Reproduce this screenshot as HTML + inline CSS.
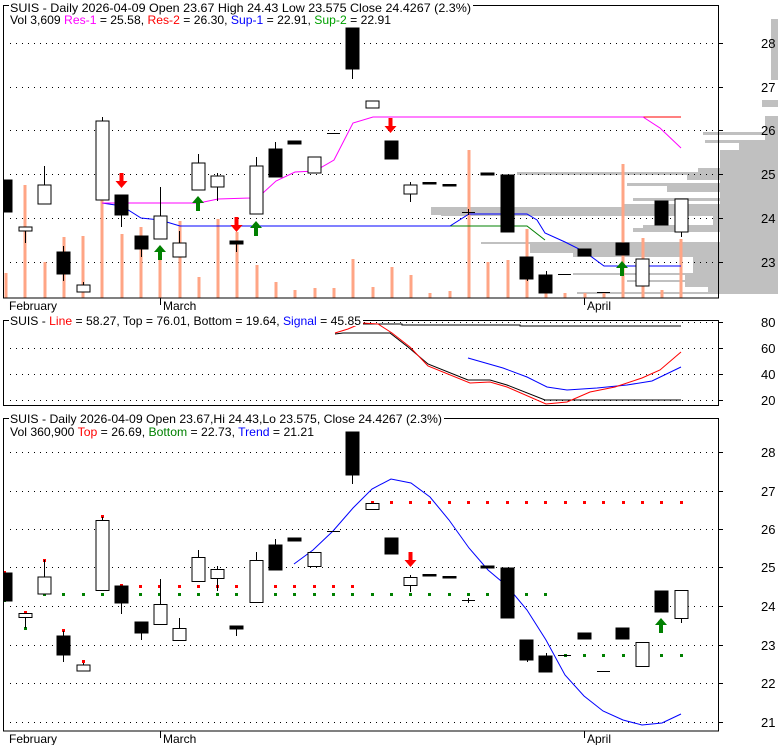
<!DOCTYPE html>
<html><head><meta charset="utf-8"><style>
html,body{margin:0;padding:0;background:#fff;}
svg{display:block;font-family:"Liberation Sans",Arial,sans-serif;font-size:12px;}
</style></head><body>
<svg width="780" height="745" viewBox="0 0 780 745" xmlns="http://www.w3.org/2000/svg">
<defs>
<clipPath id="c1"><rect x="3" y="5" width="775" height="293"/></clipPath>
<clipPath id="c1b"><rect x="3" y="5" width="716" height="293"/></clipPath>
<clipPath id="c3"><rect x="3" y="418" width="716" height="313"/></clipPath>
</defs>
<rect width="780" height="745" fill="#fff"/>

<!-- ===== TOP PANEL ===== -->
<g clip-path="url(#c1)" fill="#c0c0c0">
<rect x="771" y="19" width="8" height="61"/>
<rect x="762" y="100" width="17" height="7"/>
<rect x="765" y="116" width="14" height="178"/>
<rect x="703" y="132" width="76" height="3"/>
<rect x="705" y="140" width="74" height="3"/>
<rect x="739" y="143" width="40" height="8"/>
<rect x="720" y="150" width="59" height="144"/>
<rect x="698" y="168" width="81" height="4"/>
<rect x="517" y="172" width="262" height="3"/>
<rect x="687" y="175" width="92" height="5"/>
<rect x="627" y="183" width="152" height="3"/>
<rect x="667" y="186" width="112" height="6"/>
<rect x="633" y="198" width="146" height="3"/>
<rect x="623" y="204" width="156" height="3"/>
<rect x="431" y="207" width="348" height="8"/>
<rect x="441" y="211" width="338" height="5"/>
<rect x="713" y="216" width="66" height="10"/>
<rect x="643" y="225" width="136" height="3"/>
<rect x="633" y="228" width="146" height="4"/>
<rect x="481" y="242" width="298" height="2"/>
<rect x="530" y="244" width="249" height="9"/>
<rect x="573" y="253" width="206" height="4"/>
<rect x="693" y="257" width="86" height="16"/>
<rect x="573" y="273" width="206" height="2"/>
<rect x="685" y="275" width="94" height="12"/>
<rect x="627" y="280" width="152" height="2"/>
<rect x="708" y="287" width="71" height="6"/>
<rect x="577" y="292" width="202" height="2"/>
</g>

<!-- grid -->
<g stroke="#000" stroke-width="1" stroke-dasharray="1,5">
<line x1="10" y1="43.5" x2="719" y2="43.5"/>
<line x1="10" y1="87.5" x2="719" y2="87.5"/>
<line x1="10" y1="130.5" x2="719" y2="130.5"/>
<line x1="10" y1="174.5" x2="719" y2="174.5"/>
<line x1="10" y1="218.5" x2="719" y2="218.5"/>
<line x1="10" y1="262.5" x2="719" y2="262.5"/>
</g>

<!-- volume bars -->
<g clip-path="url(#c1b)" fill="#ffa585">
<rect x="4.5" y="273" width="3" height="25"/>
<rect x="23.5" y="185" width="3" height="113"/>
<rect x="43.5" y="262" width="3" height="36"/>
<rect x="62.5" y="237" width="3" height="61"/>
<rect x="81.5" y="236" width="3" height="62"/>
<rect x="100.5" y="200" width="3" height="98"/>
<rect x="120.5" y="234" width="3" height="64"/>
<rect x="139.5" y="227" width="3" height="71"/>
<rect x="158.5" y="257" width="3" height="41"/>
<rect x="178.5" y="221" width="3" height="77"/>
<rect x="197.5" y="277" width="3" height="21"/>
<rect x="216.5" y="219" width="3" height="79"/>
<rect x="235.5" y="232" width="3" height="66"/>
<rect x="255.5" y="265" width="3" height="33"/>
<rect x="274.5" y="282" width="3" height="16"/>
<rect x="293.5" y="290" width="3" height="8"/>
<rect x="313.5" y="288" width="3" height="10"/>
<rect x="332.5" y="288" width="3" height="10"/>
<rect x="351.5" y="259" width="3" height="39"/>
<rect x="371.5" y="287" width="3" height="11"/>
<rect x="390.5" y="267" width="3" height="31"/>
<rect x="409.5" y="275" width="3" height="23"/>
<rect x="428.5" y="293" width="3" height="5"/>
<rect x="448.5" y="291" width="3" height="7"/>
<rect x="467.5" y="150" width="3" height="148"/>
<rect x="486.5" y="262" width="3" height="36"/>
<rect x="506.5" y="260" width="3" height="38"/>
<rect x="525.5" y="229" width="3" height="69"/>
<rect x="544.5" y="292" width="3" height="6"/>
<rect x="563.5" y="293" width="3" height="5"/>
<rect x="583.5" y="293" width="3" height="5"/>
<rect x="602.5" y="293" width="3" height="5"/>
<rect x="621.5" y="164" width="3" height="134"/>
<rect x="641.5" y="238" width="3" height="60"/>
<rect x="660.5" y="290" width="3" height="8"/>
<rect x="679.5" y="239" width="3" height="59"/>
</g>

<!-- support / resistance -->
<g fill="none" stroke-width="1">
<polyline stroke="#008000" points="450,226 527,226 545,240"/>
<polyline stroke="#0000ff" points="102,203 122,206 141,218 160,220 180,226 450,226 469,214 527,214 537,220 545,233 565,242 585,252 604,266 681,266"/>
<polyline stroke="#ff0000" points="643,117 681,117"/>
<polyline stroke="#ff00ff" points="102,203 199,203 218,199 250,198 263,193 276,181 295,172 315,171 334,160 353,123 373,117 643,117 660,128 681,148"/>
</g>

<!-- candles top -->
<g stroke="#000" stroke-width="1" clip-path="url(#c1b)">
<line x1="25.5" y1="227" x2="25.5" y2="243"/><rect x="19" y="227" width="13" height="4" fill="#fff"/>
<line x1="44.5" y1="166" x2="44.5" y2="185"/><rect x="38" y="185" width="13" height="19" fill="#fff"/>
<line x1="63.5" y1="246" x2="63.5" y2="281"/><rect x="57" y="252" width="13" height="22" fill="#000"/>
<line x1="83.5" y1="282" x2="83.5" y2="285"/><rect x="77" y="285" width="13" height="7" fill="#fff"/>
<line x1="102.5" y1="117" x2="102.5" y2="121"/><rect x="96" y="121" width="13" height="79" fill="#fff"/>
<line x1="121.5" y1="195" x2="121.5" y2="227"/><rect x="115" y="195" width="13" height="20" fill="#000"/>
<line x1="141.5" y1="236" x2="141.5" y2="257"/><rect x="135" y="236" width="13" height="13" fill="#000"/>
<line x1="160.5" y1="187" x2="160.5" y2="216"/><rect x="154" y="216" width="13" height="23" fill="#fff"/>
<line x1="179.5" y1="231" x2="179.5" y2="243"/><rect x="173" y="243" width="13" height="14" fill="#fff"/>
<line x1="198.5" y1="154" x2="198.5" y2="163"/><rect x="192" y="163" width="13" height="27" fill="#fff"/>
<line x1="217.5" y1="173" x2="217.5" y2="201"/><rect x="211" y="176" width="13" height="11" fill="#fff"/>
<line x1="236.5" y1="241" x2="236.5" y2="252"/><rect x="230" y="241" width="13" height="3" fill="#000"/>
<line x1="256.5" y1="157" x2="256.5" y2="166"/><rect x="250" y="166" width="13" height="48" fill="#fff"/>
<line x1="275.5" y1="142" x2="275.5" y2="149"/><rect x="269" y="149" width="13" height="28" fill="#000"/>
<rect x="288" y="141" width="13" height="3" fill="#000"/>
<rect x="308" y="157" width="13" height="16" fill="#fff"/>
<line x1="327" y1="133.5" x2="340" y2="133.5"/>
<line x1="352.5" y1="28" x2="352.5" y2="79"/><rect x="346" y="28" width="13" height="41" fill="#000"/>
<rect x="366" y="101" width="13" height="7" fill="#fff"/>
<rect x="385" y="141" width="13" height="18" fill="#000"/>
<line x1="410.5" y1="182" x2="410.5" y2="202"/><rect x="404" y="185" width="13" height="9" fill="#fff"/>
<rect x="423" y="182.5" width="13" height="1.5" fill="#000"/>
<rect x="443" y="184.5" width="13" height="1.5" fill="#000"/>
<line x1="462" y1="212.5" x2="475" y2="212.5"/><line x1="468.5" y1="209" x2="468.5" y2="215"/>
<rect x="481" y="173" width="13" height="2" fill="#000"/>
<rect x="501" y="175" width="13" height="57" fill="#000"/>
<line x1="527.5" y1="257" x2="527.5" y2="281"/><rect x="520" y="257" width="13" height="22" fill="#000"/>
<line x1="546.5" y1="271" x2="546.5" y2="275"/><rect x="539" y="275" width="13" height="18" fill="#000"/>
<line x1="558" y1="274.5" x2="571" y2="274.5"/>
<rect x="578" y="249" width="13" height="7" fill="#000"/>
<line x1="597" y1="292.5" x2="610" y2="292.5"/>
<rect x="616" y="243" width="13" height="12" fill="#000"/>
<rect x="636" y="259" width="13" height="27" fill="#fff"/>
<rect x="655" y="201" width="13" height="24" fill="#000"/>
<line x1="681.5" y1="232" x2="681.5" y2="237"/><rect x="675" y="199" width="13" height="33" fill="#fff"/>
<rect x="-1" y="180" width="13" height="32" fill="#000"/>
</g>

<!-- arrows top -->
<g stroke="none">
<path fill="#ff0000" d="M119.5,173h4v8h4l-6,7l-6,-7h4z"/>
<path fill="#ff0000" d="M234.5,217h4v8h4l-6,7l-6,-7h4z"/>
<path fill="#ff0000" d="M388.5,118h4v8h4l-6,7l-6,-7h4z"/>
<path fill="#008000" d="M158,260h4v-8h4l-6,-7l-6,7h4z"/>
<path fill="#008000" d="M196,211h4v-8h4l-6,-7l-6,7h4z"/>
<path fill="#008000" d="M254,236h4v-8h4l-6,-7l-6,7h4z"/>
<path fill="#008000" d="M620,276h4v-8h4l-6,-7l-6,7h4z"/>
</g>

<!-- frame top -->
<rect x="3.5" y="5.5" width="715" height="292.5" fill="none" stroke="#000"/>
<g stroke="#000"><line x1="719" y1="43.5" x2="723" y2="43.5"/><line x1="719" y1="87.5" x2="723" y2="87.5"/><line x1="719" y1="130.5" x2="723" y2="130.5"/><line x1="719" y1="174.5" x2="723" y2="174.5"/><line x1="719" y1="218.5" x2="723" y2="218.5"/><line x1="719" y1="262.5" x2="723" y2="262.5"/>
<line x1="160.5" y1="298" x2="160.5" y2="305"/><line x1="584.5" y1="298" x2="584.5" y2="305"/></g>
<rect x="9" y="0" width="464" height="14" fill="#fff"/>
<text x="10" y="12" textLength="461" lengthAdjust="spacingAndGlyphs">SUIS - Daily 2026-04-09 Open 23.67  High 24.43  Low 23.575  Close 24.4267 (2.3%)</text>
<text x="10" y="24" textLength="381" lengthAdjust="spacingAndGlyphs">Vol 3,609 <tspan fill="#ff00ff">Res-1</tspan> = 25.58, <tspan fill="#ff0000">Res-2</tspan> = 26.30, <tspan fill="#0000ff">Sup-1</tspan> = 22.91, <tspan fill="#00a000">Sup-2</tspan> = 22.91</text>
<g font-size="13"><text x="761" y="48">28</text><text x="761" y="92">27</text><text x="761" y="135">26</text><text x="761" y="179">25</text><text x="761" y="223">24</text><text x="761" y="267">23</text></g>
<text x="9" y="310">February</text><text x="163" y="310">March</text><text x="587" y="310">April</text>

<!-- ===== PANEL 2 ===== -->
<g stroke="#000" stroke-dasharray="1,5">
<line x1="10" y1="322.5" x2="719" y2="322.5"/><line x1="10" y1="348.5" x2="719" y2="348.5"/><line x1="10" y1="374.5" x2="719" y2="374.5"/><line x1="10" y1="400.5" x2="719" y2="400.5"/>
</g>
<g fill="none" stroke-width="1">
<polyline stroke="#000" points="362,324 402,324 402,325 520,325 520,326 681,326"/>
<polyline stroke="#000" points="335,334 343,333 390,333 408,347 428,364 468,380 490,380 507,385 545,400 681,400"/>
<polyline stroke="#0000ff" points="468,358 503,368 527,377 547,387 567,390 597,388 627,385 652,381 681,367"/>
<polyline stroke="#ff0000" points="335,333 348,329 362,323 378,324 392,333 410,347 428,366 470,383 490,382 507,387 546,404 567,402 590,392 615,387 642,378 660,370 681,352"/>
</g>
<rect x="3.5" y="320.5" width="715" height="85" fill="none" stroke="#000"/>
<g stroke="#000"><line x1="719" y1="322.5" x2="723" y2="322.5"/><line x1="719" y1="348.5" x2="723" y2="348.5"/><line x1="719" y1="374.5" x2="723" y2="374.5"/><line x1="719" y1="400.5" x2="723" y2="400.5"/></g>
<rect x="9" y="314" width="354" height="12" fill="#fff"/>
<text x="10" y="325" textLength="351" lengthAdjust="spacingAndGlyphs">SUIS - <tspan fill="#ff0000">Line</tspan> = 58.27, Top = 76.01, Bottom = 19.64, <tspan fill="#0000ff">Signal</tspan> = 45.85</text>
<g font-size="13"><text x="761" y="327">80</text><text x="761" y="353">60</text><text x="761" y="379">40</text><text x="761" y="405">20</text></g>

<!-- ===== PANEL 3 ===== -->
<g stroke="#000" stroke-dasharray="1,5">
<line x1="10" y1="452.5" x2="719" y2="452.5"/><line x1="10" y1="491.5" x2="719" y2="491.5"/><line x1="10" y1="529.5" x2="719" y2="529.5"/><line x1="10" y1="567.5" x2="719" y2="567.5"/><line x1="10" y1="606.5" x2="719" y2="606.5"/><line x1="10" y1="645.5" x2="719" y2="645.5"/><line x1="10" y1="683.5" x2="719" y2="683.5"/><line x1="10" y1="722.5" x2="719" y2="722.5"/>
</g>
<g fill="#ff0000">
<rect x="3" y="571" width="3" height="3"/><rect x="24" y="611" width="3" height="3"/><rect x="43" y="559" width="3" height="3"/><rect x="62" y="629" width="3" height="3"/><rect x="82" y="660" width="3" height="3"/><rect x="101" y="515" width="3" height="3"/><rect x="120" y="584" width="3" height="3"/>
<rect x="139" y="585" width="3" height="3"/><rect x="158" y="585" width="3" height="3"/><rect x="178" y="585" width="3" height="3"/><rect x="197" y="585" width="3" height="3"/><rect x="216" y="585" width="3" height="3"/><rect x="235" y="585" width="3" height="3"/>
<rect x="274" y="585" width="3" height="3"/><rect x="293" y="585" width="3" height="3"/><rect x="313" y="585" width="3" height="3"/><rect x="332" y="585" width="3" height="3"/><rect x="351" y="585" width="3" height="3"/>
<rect x="371" y="501" width="3" height="3"/><rect x="390" y="501" width="3" height="3"/><rect x="409" y="501" width="3" height="3"/><rect x="428" y="501" width="3" height="3"/><rect x="448" y="501" width="3" height="3"/><rect x="467" y="501" width="3" height="3"/><rect x="486" y="501" width="3" height="3"/><rect x="506" y="501" width="3" height="3"/><rect x="525" y="501" width="3" height="3"/><rect x="544" y="501" width="3" height="3"/><rect x="564" y="501" width="3" height="3"/><rect x="583" y="501" width="3" height="3"/><rect x="602" y="501" width="3" height="3"/><rect x="622" y="501" width="3" height="3"/><rect x="641" y="501" width="3" height="3"/><rect x="660" y="501" width="3" height="3"/><rect x="680" y="501" width="3" height="3"/>
</g>
<g fill="#008000">
<rect x="3" y="599" width="3" height="3"/><rect x="24" y="627" width="3" height="3"/><rect x="43" y="593" width="3" height="3"/>
<rect x="62" y="593" width="3" height="3"/><rect x="82" y="593" width="3" height="3"/><rect x="101" y="593" width="3" height="3"/><rect x="139" y="593" width="3" height="3"/><rect x="158" y="593" width="3" height="3"/><rect x="178" y="593" width="3" height="3"/><rect x="197" y="593" width="3" height="3"/><rect x="216" y="593" width="3" height="3"/><rect x="235" y="593" width="3" height="3"/><rect x="274" y="593" width="3" height="3"/><rect x="293" y="593" width="3" height="3"/><rect x="313" y="593" width="3" height="3"/><rect x="332" y="593" width="3" height="3"/><rect x="351" y="593" width="3" height="3"/><rect x="371" y="593" width="3" height="3"/><rect x="390" y="593" width="3" height="3"/><rect x="409" y="593" width="3" height="3"/><rect x="428" y="593" width="3" height="3"/><rect x="448" y="593" width="3" height="3"/><rect x="467" y="593" width="3" height="3"/><rect x="486" y="593" width="3" height="3"/><rect x="525" y="593" width="3" height="3"/><rect x="544" y="593" width="3" height="3"/>
<rect x="525" y="654" width="3" height="3"/><rect x="564" y="654" width="3" height="3"/><rect x="583" y="654" width="3" height="3"/><rect x="602" y="654" width="3" height="3"/><rect x="622" y="654" width="3" height="3"/><rect x="660" y="654" width="3" height="3"/><rect x="680" y="654" width="3" height="3"/>
</g>
<polyline fill="none" stroke="#0000ff" points="294,564 313,550 333,531 353,508 372,489 391,479 411,483 430,497 449,520 469,548 488,570 507,586 527,610 546,640 565,675 584,696 603,711 623,720 642,725 662,723 681,714"/>

<g stroke="#000" stroke-width="1" clip-path="url(#c3)">
<rect x="-1" y="573" width="13" height="28" fill="#000"/>
<line x1="25.5" y1="614" x2="25.5" y2="628"/><rect x="19" y="613.5" width="13" height="4" fill="#fff"/>
<line x1="44.5" y1="560" x2="44.5" y2="577"/><rect x="38" y="577" width="13" height="17" fill="#fff"/>
<line x1="63.5" y1="631" x2="63.5" y2="662"/><rect x="57" y="636" width="13" height="19" fill="#000"/>
<line x1="83.5" y1="663" x2="83.5" y2="665"/><rect x="77" y="665" width="13" height="6" fill="#fff"/>
<line x1="102.5" y1="517" x2="102.5" y2="520"/><rect x="96" y="520.5" width="13" height="70" fill="#fff"/>
<line x1="121.5" y1="586" x2="121.5" y2="614"/><rect x="115" y="586" width="13" height="17" fill="#000"/>
<line x1="141.5" y1="622" x2="141.5" y2="640"/><rect x="135" y="622" width="13" height="11" fill="#000"/>
<line x1="160.5" y1="579" x2="160.5" y2="604"/><rect x="154" y="604.5" width="13" height="20" fill="#fff"/>
<line x1="179.5" y1="618" x2="179.5" y2="628"/><rect x="173" y="628.5" width="13" height="12" fill="#fff"/>
<line x1="198.5" y1="550" x2="198.5" y2="557"/><rect x="192" y="557.5" width="13" height="24" fill="#fff"/>
<line x1="217.5" y1="566" x2="217.5" y2="591"/><rect x="211" y="569.5" width="13" height="9" fill="#fff"/>
<line x1="236.5" y1="626" x2="236.5" y2="636"/><rect x="230" y="626" width="13" height="3" fill="#000"/>
<line x1="256.5" y1="552" x2="256.5" y2="560"/><rect x="250" y="560.5" width="13" height="42" fill="#fff"/>
<line x1="275.5" y1="539" x2="275.5" y2="545"/><rect x="269" y="545" width="13" height="25" fill="#000"/>
<rect x="288" y="538" width="13" height="3" fill="#000"/>
<rect x="308" y="552.5" width="13" height="14" fill="#fff"/>
<line x1="327" y1="531.5" x2="340" y2="531.5"/>
<line x1="352.5" y1="432" x2="352.5" y2="484"/><rect x="346" y="432" width="13" height="43" fill="#000"/>
<rect x="366" y="503.5" width="13" height="6" fill="#fff"/>
<rect x="385" y="538" width="13" height="16" fill="#000"/>
<line x1="410.5" y1="575" x2="410.5" y2="592"/><rect x="404" y="577.5" width="13" height="8" fill="#fff"/>
<rect x="423" y="574.5" width="13" height="1.5" fill="#000"/>
<rect x="443" y="576.5" width="13" height="1.5" fill="#000"/>
<line x1="462" y1="600.5" x2="475" y2="600.5"/><line x1="468.5" y1="598" x2="468.5" y2="603"/>
<rect x="481" y="566" width="13" height="2" fill="#000"/>
<rect x="501" y="568" width="13" height="50" fill="#000"/>
<line x1="527.5" y1="640" x2="527.5" y2="662"/><rect x="520" y="640" width="13" height="20" fill="#000"/>
<line x1="546.5" y1="653" x2="546.5" y2="656"/><rect x="539" y="656" width="13" height="16" fill="#000"/>
<line x1="558" y1="655.5" x2="571" y2="655.5"/>
<rect x="578" y="633" width="13" height="6" fill="#000"/>
<line x1="597" y1="671.5" x2="610" y2="671.5"/>
<rect x="616" y="628" width="13" height="11" fill="#000"/>
<rect x="636" y="642.5" width="13" height="24" fill="#fff"/>
<rect x="655" y="591" width="13" height="21" fill="#000"/>
<line x1="681.5" y1="619" x2="681.5" y2="623"/><rect x="675" y="590.5" width="13" height="28" fill="#fff"/>
</g>
<path fill="#ff0000" d="M408.5,552h4v8h4l-6,7l-6,-7h4z"/>
<path fill="#008000" d="M659,633h4v-8h4l-6,-7l-6,7h4z"/>

<rect x="3.5" y="418.5" width="715" height="312.5" fill="none" stroke="#000"/>
<g stroke="#000"><line x1="719" y1="452.5" x2="723" y2="452.5"/><line x1="719" y1="491.5" x2="723" y2="491.5"/><line x1="719" y1="529.5" x2="723" y2="529.5"/><line x1="719" y1="567.5" x2="723" y2="567.5"/><line x1="719" y1="606.5" x2="723" y2="606.5"/><line x1="719" y1="645.5" x2="723" y2="645.5"/><line x1="719" y1="683.5" x2="723" y2="683.5"/><line x1="719" y1="722.5" x2="723" y2="722.5"/>
<line x1="160.5" y1="731" x2="160.5" y2="738"/><line x1="584.5" y1="731" x2="584.5" y2="738"/></g>
<rect x="9" y="412" width="435" height="13" fill="#fff"/>
<text x="10" y="423" textLength="432" lengthAdjust="spacingAndGlyphs">SUIS - Daily 2026-04-09 Open 23.67,Hi 24.43,Lo 23.575, Close 24.4267 (2.3%)</text>
<text x="10" y="436" textLength="304" lengthAdjust="spacingAndGlyphs">Vol 360,900 <tspan fill="#ff0000">Top</tspan> = 26.69, <tspan fill="#008000">Bottom</tspan> = 22.73, <tspan fill="#0000ff">Trend</tspan> = 21.21</text>
<g font-size="13"><text x="761" y="457">28</text><text x="761" y="496">27</text><text x="761" y="534">26</text><text x="761" y="572">25</text><text x="761" y="611">24</text><text x="761" y="650">23</text><text x="761" y="688">22</text><text x="761" y="727">21</text></g>
<text x="9" y="743">February</text><text x="163" y="743">March</text><text x="587" y="743">April</text>
</svg>
</body></html>
